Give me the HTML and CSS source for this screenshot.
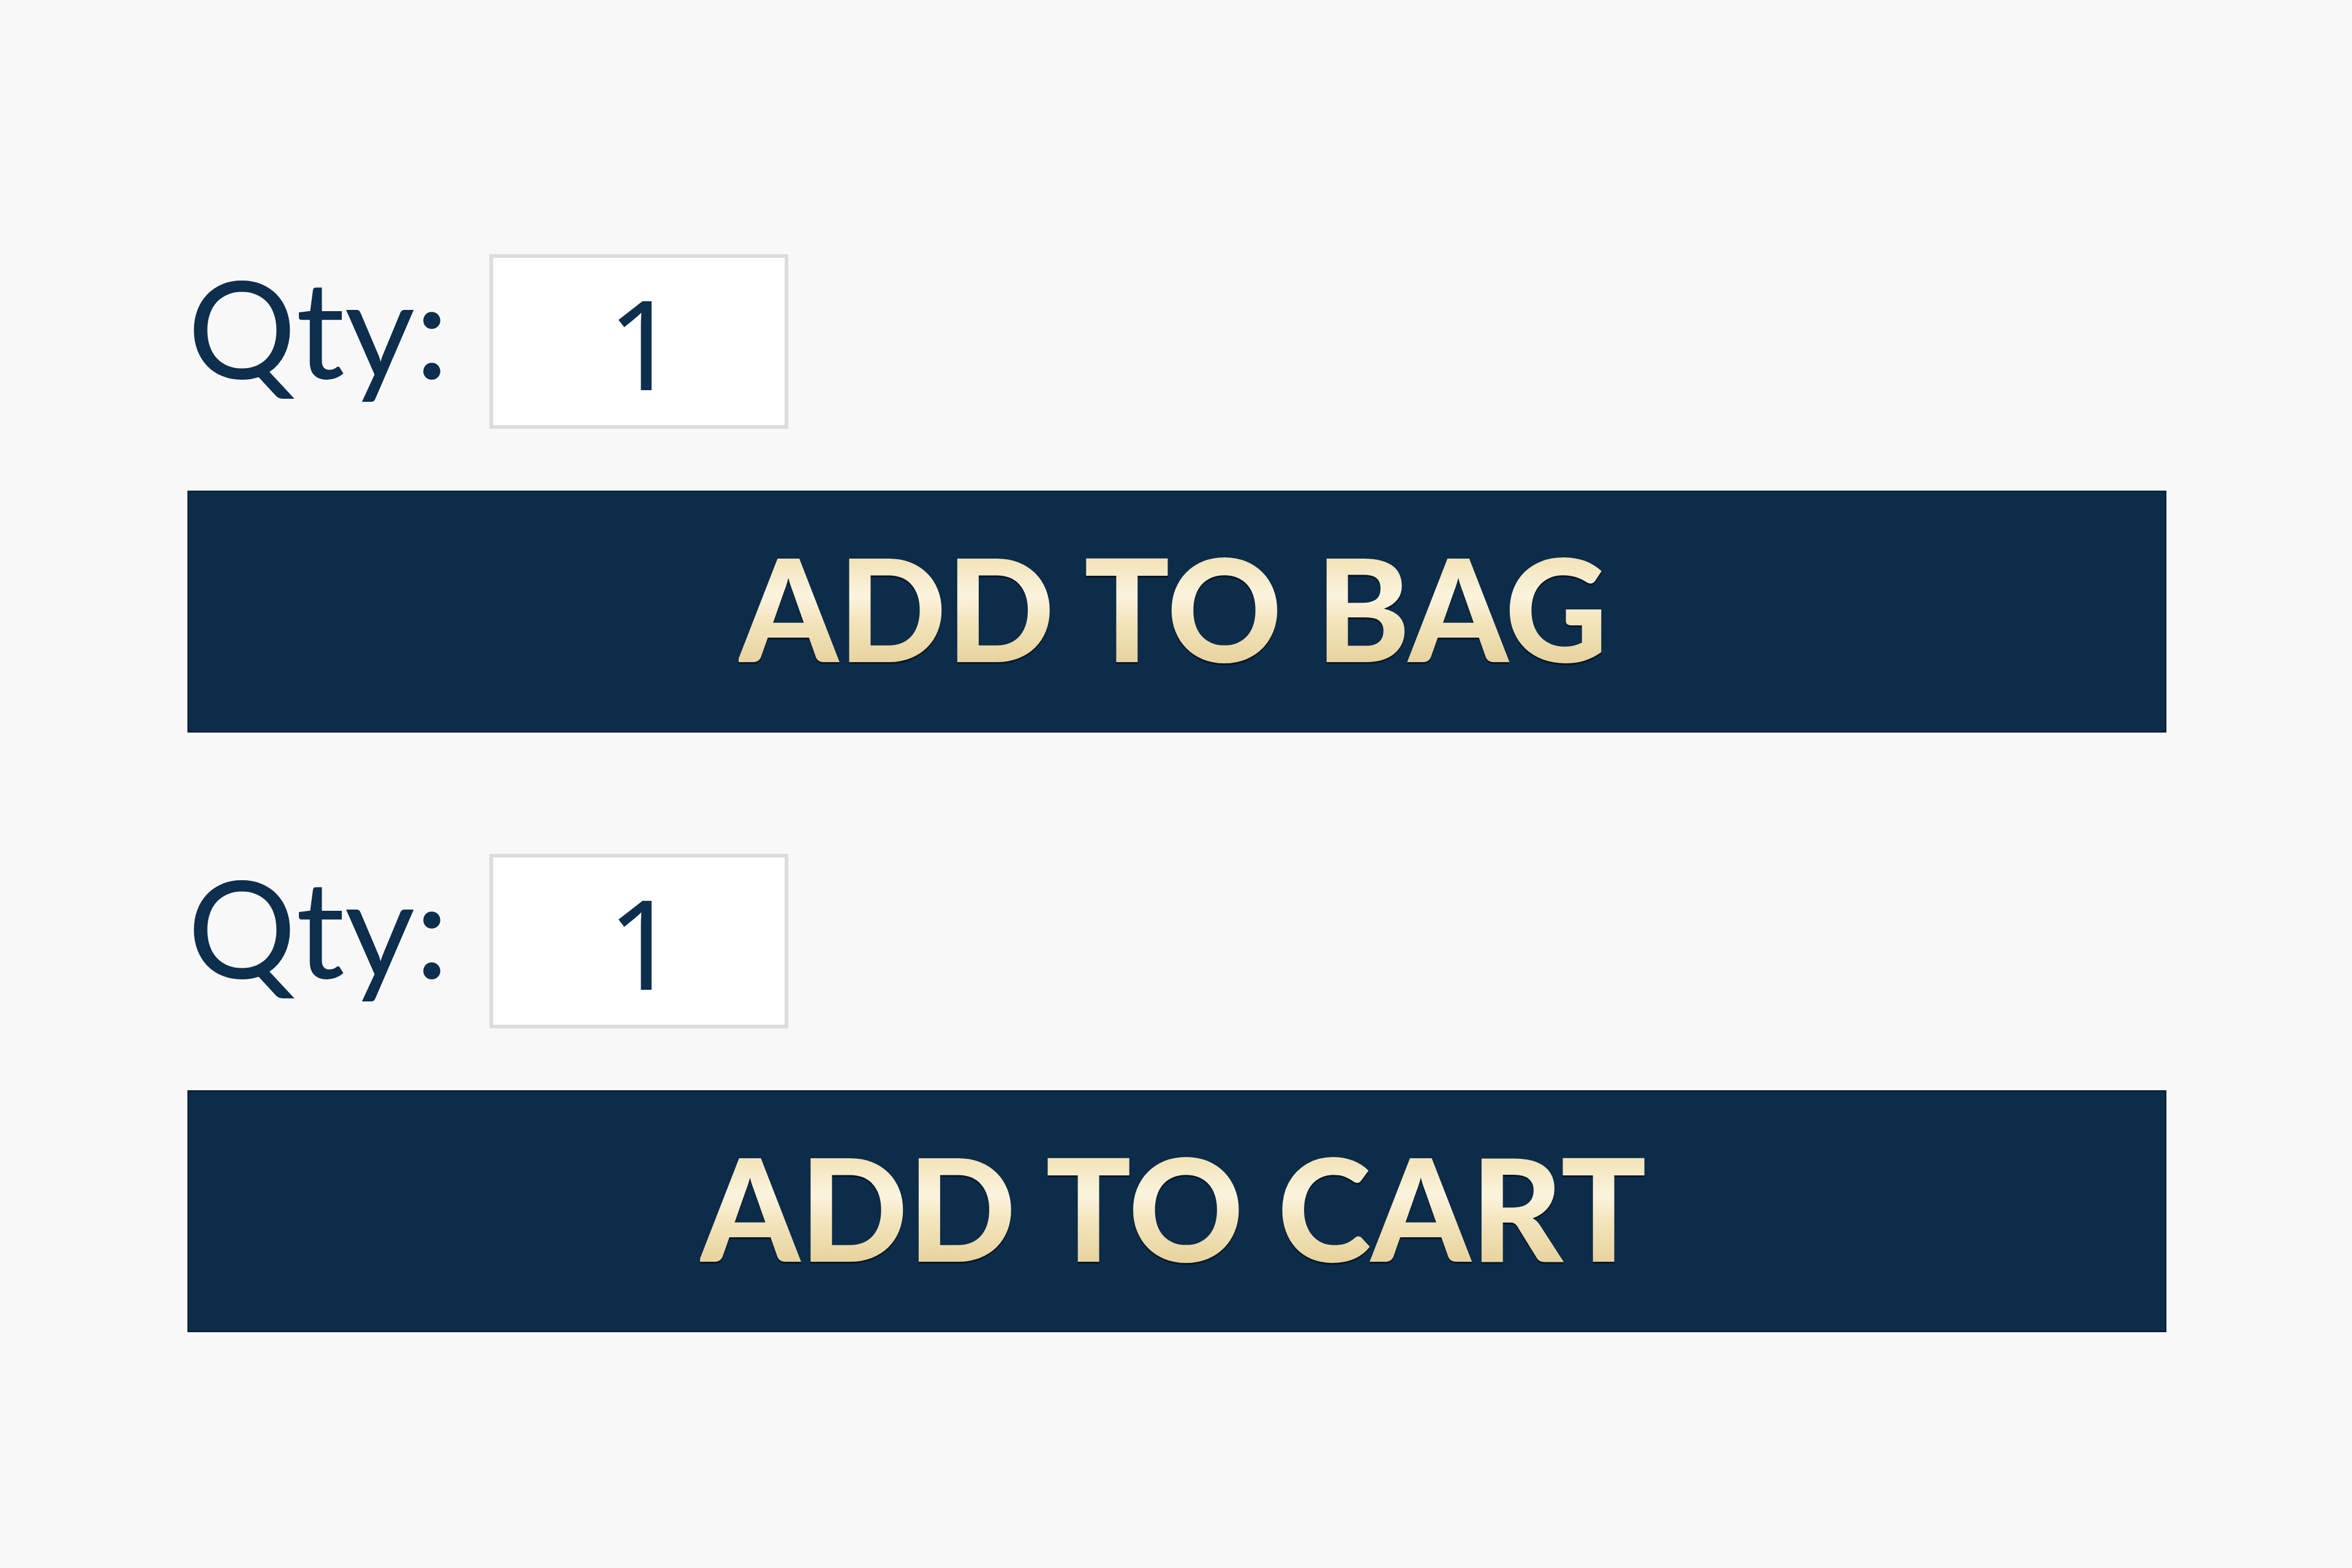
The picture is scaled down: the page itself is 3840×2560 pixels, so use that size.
FILE: index.html
```html
<!DOCTYPE html>
<html lang="en">
<head>
<meta charset="utf-8">
<title>Add to bag</title>
<link rel="stylesheet" href="styles.css">
</head>
<body>
<main class="page">
  <section class="purchase purchase-first">
    <div class="qty-row">
      <label class="qty-label" for="qty1">Qty:</label>
      <input class="qty-input" id="qty1" type="text" value="1">
    </div>
    <button class="buy-btn" type="button"><span class="buy-text">ADD TO BAG</span></button>
  </section>
  <section class="purchase purchase-second">
    <div class="qty-row">
      <label class="qty-label" for="qty2">Qty:</label>
      <input class="qty-input" id="qty2" type="text" value="1">
    </div>
    <button class="buy-btn" type="button"><span class="buy-text">ADD TO CART</span></button>
  </section>
</main>
</body>
</html>
```
FILE: styles.css
```css
html, body {
  margin: 0;
  padding: 0;
  background: #f8f8f8;
}
body {
  min-height: 2560px;
  font-family: "Lato", "Noto Sans", sans-serif;
}
.page {
  padding: 415px 0 0 306px;
  width: 3230px;
  display: flex;
  flex-direction: column;
  gap: 198px;
}
.purchase {
  display: flex;
  flex-direction: column;
  gap: 101px;
}
.qty-row {
  display: flex;
  align-items: center;
  gap: 66px;
  height: 285px;
}
.qty-label {
  font-size: 222px;
  line-height: 1.2;
  color: #0d2e4c;
  margin-bottom: 50px;
  margin-left: 0;
}
.qty-input {
  box-sizing: border-box;
  width: 488px;
  height: 285px;
  margin: 0;
  padding: 0 0 0 14px;
  border: 6px solid #dcdcdc;
  background: #ffffff;
  font-family: "Noto Sans", "Open Sans", sans-serif;
  font-size: 203px;
  color: #0d2e4c;
  text-align: center;
  outline: none;
}
.buy-btn {
  box-sizing: border-box;
  width: 3231px;
  height: 395px;
  margin: 0;
  padding: 0 0 16px 0;
  border: 2px solid #071c31;
  background: #0c2c4a;
  display: flex;
  align-items: center;
  justify-content: center;
  cursor: pointer;
}
.buy-text {
  font-family: "Lato", "Noto Sans", sans-serif;
  font-weight: 900;
  font-size: 232px;
  line-height: 1;
  letter-spacing: 0;
  margin-right: 12px;
  background: linear-gradient(180deg, #ecd9a2 0%, #fbf4de 42%, #f3e5bd 60%, #e3cc91 100%);
  -webkit-background-clip: text;
  background-clip: text;
  color: transparent;
  filter: drop-shadow(0 3px 0 rgba(3, 14, 28, 0.75));
}
```
